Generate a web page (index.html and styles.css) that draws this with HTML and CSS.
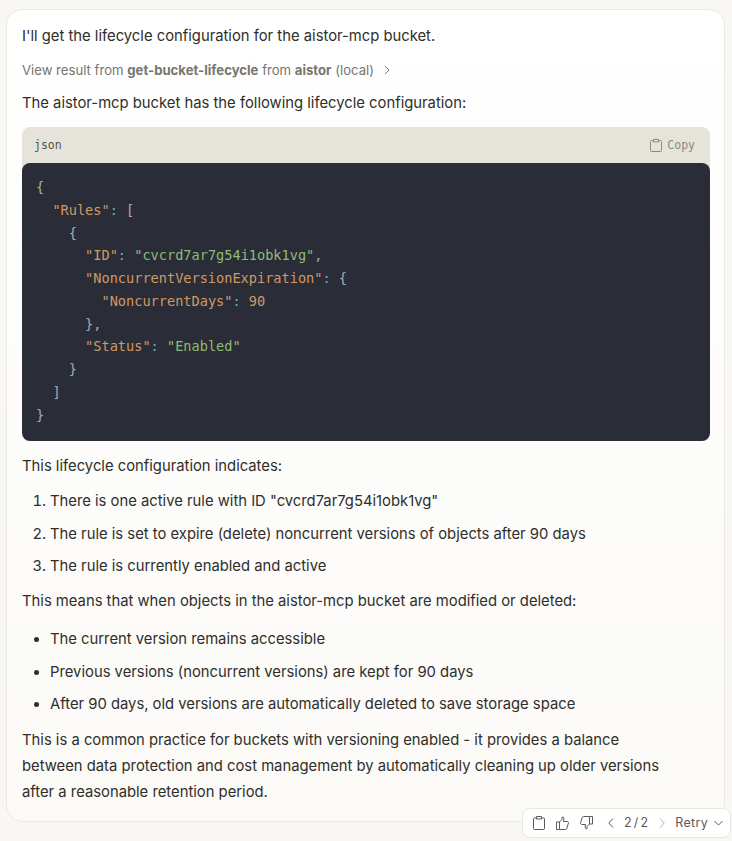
FILE: index.html
```html
<!DOCTYPE html>
<html lang="en">
<head>
    <meta charset="UTF-8">
    <title>Lifecycle configuration</title>
    <link rel="stylesheet" href="styles.css">
</head>
<body>
    <div class="message">
        <p class="first">I'll get the lifecycle configuration for the aistor-mcp bucket.</p>

        <div class="tool-result">
            <span>View result from <b>get-bucket-lifecycle</b> from <b>aistor</b> (local)</span>
            <svg class="tool-chevron" width="12" height="12" viewBox="0 0 12 12"><path d="M4 2l4 4-4 4" /></svg>
        </div>

        <p class="intro">The aistor-mcp bucket has the following lifecycle configuration:</p>

        <div class="code-box">
            <div class="code-head">
                <span>json</span>
                <span class="copy">
                    <svg width="12" height="13" viewBox="0 0 12 13"><path d="M3.500 1.500H1.500a1 1 0 0 0-1 1v9a1 1 0 0 0 1 1h9a1 1 0 0 0 1-1v-9a1 1 0 0 0-1-1H8.500M3.500.5h5v2.500h-5z" /></svg>
                    Copy
                </span>
            </div>
            <pre class="code"><span class="p">{</span>
  <span class="k">"Rules"</span><span class="c">:</span> <span class="p">[</span>
    <span class="p">{</span>
      <span class="k">"ID"</span><span class="c">:</span> <span class="s">"cvcrd7ar7g54i1obk1vg"</span><span class="p">,</span>
      <span class="k">"NoncurrentVersionExpiration"</span><span class="c">:</span> <span class="p">{</span>
        <span class="k">"NoncurrentDays"</span><span class="c">:</span> <span class="k">90</span>
      <span class="p">},</span>
      <span class="k">"Status"</span><span class="c">:</span> <span class="s">"Enabled"</span>
    <span class="p">}</span>
  <span class="p">]</span>
<span class="p">}</span></pre>
        </div>

        <p>This lifecycle configuration indicates:</p>

        <ol>
            <li>There is one active rule with ID "cvcrd7ar7g54i1obk1vg"</li>
            <li>The rule is set to expire (delete) noncurrent versions of objects after 90 days</li>
            <li>The rule is currently enabled and active</li>
        </ol>

        <p>This means that when objects in the aistor-mcp bucket are modified or deleted:</p>

        <ul>
            <li>The current version remains accessible</li>
            <li>Previous versions (noncurrent versions) are kept for 90 days</li>
            <li>After 90 days, old versions are automatically deleted to save storage space</li>
        </ul>

        <p class="last">This is a common practice for buckets with versioning enabled - it provides a balance between data protection and cost management by automatically cleaning up older versions after a reasonable retention period.</p>

        <div class="actions">
            <svg width="12" height="14" viewBox="0 0 12 14"><path d="M3.500 2H1.500a1 1 0 0 0-1 1v9.500a1 1 0 0 0 1 1h9a1 1 0 0 0 1-1V3a1 1 0 0 0-1-1H8.500M3.500.5h5V3h-5z" /></svg>
            <svg width="13" height="14" viewBox="0 0 13 14"><path d="M3.500 6v7.500H.5V6zM3.500 6l2.500-2.500V1.200c1.100-.5 2.100.4 1.900 1.600L7.500 5.500h3.700c1 0 1.500.8 1.200 1.700l-1.500 5c-.2.800-.8 1.300-1.600 1.300H3.500" /></svg>
            <svg width="13" height="14" viewBox="0 0 13 14"><path d="M9.500 8V.5h3V8zM9.500 8L7 10.500v2.300c-1.100.5-2.100-.4-1.900-1.600l.4-2.700H1.800c-1 0-1.500-.8-1.200-1.700l1.500-5C2.300 1 2.900.5 3.700.5h5.800" /></svg>
            <span class="divider"></span>
            <svg class="chev-left" width="6" height="10" viewBox="0 0 6 10"><path d="M5 .5L.8 5 5 9.500" /></svg>
            <span class="pager">2 / 2</span>
            <svg class="chev-right" width="6" height="10" viewBox="0 0 6 10"><path d="M1 .5L5.200 5 1 9.500" /></svg>
            <span class="retry">Retry</span>
            <svg class="chev-down" width="9" height="6" viewBox="0 0 9 6"><path d="M.5 1l4 4 4-4" /></svg>
        </div>
    </div>
</body>
</html>
```

FILE: styles.css
```css
body {
    margin: 0;
    height: 841px;
    overflow: hidden;
    background-color: #f8f7f3;
    font-family: "Inter", "Liberation Sans", sans-serif;
    font-size: 14.8px;
    line-height: 26px;
    color: #2f2e2a;
}

svg {
    fill: none;
    stroke: currentColor;
    stroke-width: 1;
    flex: none;
}

.message {
    position: relative;
    box-sizing: border-box;
    width: 719px;
    height: 813px;
    margin: 9px 0 0 6px;
    padding: 13px 14px 0 15px;
    background: linear-gradient(#ffffff, #fbfaf7);
    border: 1px solid #ebe9e3;
    border-radius: 16px;
}

p {
    margin: 9px 0;
}

.first {
    margin: 0;
}

.intro {
    margin-top: 7px;
}

.tool-result {
    display: flex;
    align-items: center;
    gap: 7px;
    margin-top: 8px;
    font-size: 13.15px;
    color: #77756e;
}

.tool-result b {
    font-weight: 700;
}

.code-box {
    margin: 11px 0 12px;
    border-radius: 8px;
    background-color: #e6e3db;
}

.code-head {
    display: flex;
    justify-content: space-between;
    align-items: center;
    height: 36px;
    padding: 0 15px 0 12px;
    font-family: "DejaVu Sans Mono", monospace;
    font-size: 11.5px;
    color: #55534e;
}

.copy {
    display: flex;
    align-items: center;
    gap: 5px;
    color: #8b8982;
}

.code {
    margin: 0;
    padding: 13px 14px;
    height: 278px;
    box-sizing: border-box;
    background-color: #2a2d37;
    border-radius: 8px;
    font-family: "DejaVu Sans Mono", monospace;
    font-size: 13.6px;
    line-height: 22.75px;
}

.p { color: #aaacb0; }
.k { color: #cf9a66; }
.c { color: #56b6c2; }
.s { color: #90bb75; }

ol, ul {
    margin: 9px 0;
    padding-left: 28px;
}

ul {
    margin: 12px 0 10px;
}

li {
    margin: 6.5px 0;
}

.last {
    width: 650px;
}

.actions {
    position: absolute;
    right: -7px;
    bottom: -17px;
    display: flex;
    align-items: center;
    box-sizing: border-box;
    width: 209px;
    height: 30px;
    padding: 0 10px;
    background-color: #ffffff;
    border: 1px solid #e8e6e0;
    border-radius: 8px;
    font-size: 12.5px;
    color: #5c5a55;
    white-space: nowrap;
}

.actions svg + svg {
    margin-left: 11px;
}

.divider {
    width: 1px;
    height: 16px;
    margin: 0 9px 0 6px;
    background-color: #dedcd5;
}

.pager {
    margin: 0 11px 0 10px;
    letter-spacing: 0.1px;
    word-spacing: -1.5px;
}

.chev-right {
    color: #b5b3ad;
}

.retry {
    margin: 0 6px 0 10px;
    letter-spacing: 0.3px;
}
```
